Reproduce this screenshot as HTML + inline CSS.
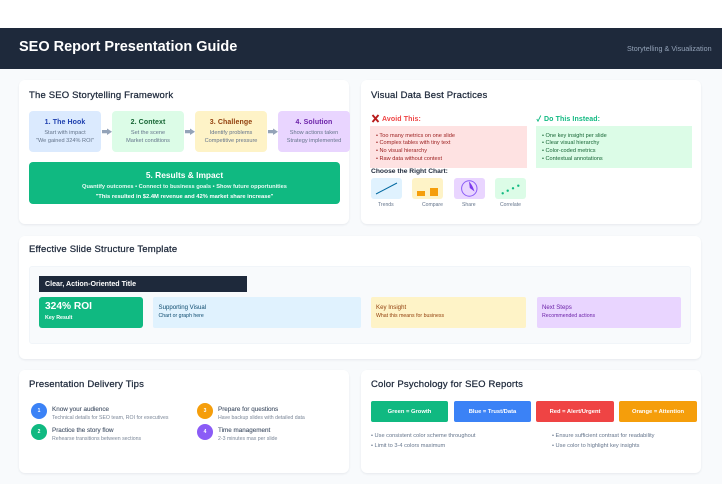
<!DOCTYPE html>
<html><head><meta charset="utf-8">
<style>
*{margin:0;padding:0;box-sizing:border-box}
html,body{width:722px;height:484px;overflow:hidden;background:#f8fafc;font-family:"Liberation Sans",sans-serif}
#w{position:absolute;left:0;top:0;width:722px;height:484px;filter:blur(.35px)}
.a{position:absolute}
.t{position:absolute;white-space:nowrap;line-height:1}
.c{text-align:center}
.card{position:absolute;background:#fff;border-radius:6px;box-shadow:0 1px 2px rgba(30,41,59,.08)}
.h{position:absolute;font-size:9.5px;font-weight:400;color:#1e293b;white-space:nowrap;line-height:1;-webkit-text-stroke:.25px #1e293b;letter-spacing:.18px}
.step{position:absolute;top:111px;width:72px;height:41px;border-radius:4px;text-align:center}
.step b{position:absolute;left:0;right:0;top:7.5px;font-size:7px;line-height:1;letter-spacing:.1px}
.step span{position:absolute;left:0;right:0;font-size:5.6px;line-height:1;color:#64748b;white-space:nowrap}
.li{position:absolute;font-size:5.6px;line-height:1;white-space:nowrap}
.ch{position:absolute;top:178px;width:31px;height:21px;border-radius:3px}
.lab{position:absolute;top:203px;font-size:5.1px;line-height:1;color:#64748b;white-space:nowrap}
.tb{position:absolute;top:297px;height:31px;border-radius:2px}
.tb i{position:absolute;left:5.5px;top:8px;font-style:normal;font-size:6.1px;line-height:1;white-space:nowrap}
.tb u{position:absolute;left:5.5px;top:17px;text-decoration:none;font-size:5.2px;line-height:1;white-space:nowrap}
.num{position:absolute;width:16px;height:16px;border-radius:50%;color:#fff;font-size:5px;font-weight:700;text-align:center;line-height:16px}
.tt{position:absolute;font-size:6.3px;line-height:1;color:#475569;white-space:nowrap;font-weight:400;-webkit-text-stroke:.12px #475569}
.td{position:absolute;font-size:5.2px;line-height:1;color:#7b8798;white-space:nowrap}
.col{position:absolute;top:401px;height:21px;border-radius:2px;color:#fff;font-size:5.8px;font-weight:700;text-align:center;line-height:23px;white-space:nowrap}
.bl{position:absolute;font-size:5.66px;line-height:1;color:#64748b;white-space:nowrap}
</style></head><body><div id="w">
<div class="a" style="left:0;top:0;width:722px;height:28px;background:#fff"></div>
<div class="a" style="left:0;top:28px;width:722px;height:41px;background:#1e293b"></div>
<div class="t" style="left:19px;top:40px;font-size:14.5px;font-weight:700;color:#fff">SEO Report Presentation Guide</div>
<div class="t" style="left:627px;top:45px;font-size:7.2px;color:#94a3b8">Storytelling &amp; Visualization</div>

<div class="card" style="left:19px;top:80px;width:330px;height:144px"></div>
<div class="card" style="left:361px;top:80px;width:340px;height:144px"></div>
<div class="card" style="left:19px;top:236px;width:682px;height:123px"></div>
<div class="card" style="left:19px;top:370px;width:330px;height:103px"></div>
<div class="card" style="left:361px;top:370px;width:340px;height:103px"></div>

<div class="h" style="left:29px;top:90.500px">The SEO Storytelling Framework</div>
<div class="step" style="left:29px;background:#dbeafe"><b style="color:#1e40af">1. The Hook</b><span style="top:19.500px">Start with impact</span><span style="top:27.500px">"We gained 324% ROI"</span></div>
<div class="step" style="left:112px;background:#dcfce7"><b style="color:#166534">2. Context</b><span style="top:19.500px">Set the scene</span><span style="top:27.500px">Market conditions</span></div>
<div class="step" style="left:195px;background:#fef3c7"><b style="color:#92400e">3. Challenge</b><span style="top:19.500px">Identify problems</span><span style="top:27.500px">Competitive pressure</span></div>
<div class="step" style="left:278px;background:#e9d5ff"><b style="color:#6b21a8">4. Solution</b><span style="top:19.500px">Show actions taken</span><span style="top:27.500px">Strategy implemented</span></div>
<svg class="a" style="left:0;top:120px" width="290" height="20" viewBox="0 120 290 20" fill="#94a3b8">
<path d="M102 130H107V128.500L112 131.700L107 135V133.300H102Z"/>
<path d="M185 130H190V128.500L195 131.700L190 135V133.300H185Z"/>
<path d="M268 130H273V128.500L278 131.700L273 135V133.300H268Z"/>
</svg>

<div class="a" style="left:29px;top:162px;width:311px;height:42px;background:#10b981;border-radius:4px"></div>
<div class="t c" style="left:29px;width:311px;top:171px;font-size:8.4px;font-weight:700;color:#fff">5. Results &amp; Impact</div>
<div class="t c" style="left:29px;width:311px;top:185px;font-size:5.7px;font-weight:700;color:#e6fbf3">Quantify outcomes • Connect to business goals • Show future opportunities</div>
<div class="t c" style="left:29px;width:311px;top:195px;font-size:5.8px;font-weight:700;color:#fff">"This resulted in $2.4M revenue and 42% market share increase"</div>

<div class="h" style="left:371px;top:90.500px">Visual Data Best Practices</div>
<svg class="a" style="left:371px;top:114px" width="9" height="9" viewBox="0 0 9 9"><path d="M1.500 1L7.500 8M7.500 1L1.500 8" stroke="#b91c1c" stroke-width="1.900"/></svg>
<div class="t" style="left:382px;top:116px;font-size:7px;font-weight:700;color:#ef4444;letter-spacing:.1px">Avoid This:</div>
<div class="a" style="left:370px;top:126px;width:157px;height:42px;background:#fee2e2"></div>
<div class="li" style="left:376px;top:134px;color:#991b1b">• Too many metrics on one slide</div>
<div class="li" style="left:376px;top:141px;color:#991b1b">• Complex tables with tiny text</div>
<div class="li" style="left:376px;top:149px;color:#991b1b">• No visual hierarchy</div>
<div class="li" style="left:376px;top:157px;color:#991b1b">• Raw data without context</div>

<svg class="a" style="left:536px;top:115px" width="6" height="7" viewBox="0 0 6 7"><path d="M.8 4L2 6.200L4.800 .5" fill="none" stroke="#10b981" stroke-width=".9"/></svg>
<div class="t" style="left:544px;top:116px;font-size:7px;font-weight:700;color:#10b981;letter-spacing:.1px">Do This Instead:</div>
<div class="a" style="left:536px;top:126px;width:156px;height:42px;background:#dcfce7"></div>
<div class="li" style="left:542px;top:134px;color:#166534">• One key insight per slide</div>
<div class="li" style="left:542px;top:141px;color:#166534">• Clear visual hierarchy</div>
<div class="li" style="left:542px;top:149px;color:#166534">• Color-coded metrics</div>
<div class="li" style="left:542px;top:157px;color:#166534">• Contextual annotations</div>

<div class="t" style="left:371px;top:169px;font-size:6.7px;font-weight:700;color:#1e293b">Choose the Right Chart:</div>
<div class="ch" style="left:371px;background:#e0f2fe"></div>
<div class="ch" style="left:412px;background:#fef3c7"></div>
<div class="ch" style="left:454px;background:#e9d5ff"></div>
<div class="ch" style="left:495px;background:#dcfce7"></div>
<svg class="a" style="left:361px;top:170px" width="180" height="32" viewBox="361 170 180 32">
<path d="M376 194L397 183" stroke="#0369a1" stroke-width="1" fill="none"/>
<rect x="417" y="191" width="8" height="5" fill="#f59e0b"/><rect x="430" y="188" width="8" height="8" fill="#f59e0b"/>
<circle cx="469.300" cy="188.500" r="7.700" fill="none" stroke="#8b5cf6" stroke-width="1"/><path d="M469 181.500L469.800 188L474.500 191.500C473 187 471.500 184 469 181.500Z" fill="#7c3aed"/>
<circle cx="502.700" cy="193.300" r="1.200" fill="#10b981"/><circle cx="507.700" cy="190.700" r="1.200" fill="#10b981"/><circle cx="513" cy="188.300" r="1.200" fill="#10b981"/><circle cx="518.300" cy="185.700" r="1.200" fill="#10b981"/>
</svg>
<div class="lab" style="left:378px">Trends</div>
<div class="lab" style="left:422px">Compare</div>
<div class="lab" style="left:462px">Share</div>
<div class="lab" style="left:500px">Correlate</div>

<div class="h" style="left:29px;top:245px">Effective Slide Structure Template</div>
<div class="a" style="left:29px;top:266px;width:662px;height:78px;background:#f8fafc;border:1px solid #f1f5f9;border-radius:3px"></div>
<div class="a" style="left:39px;top:276px;width:208px;height:16px;background:#1e293b"></div>
<div class="t" style="left:45px;top:281px;font-size:7.100px;font-weight:700;color:#fff">Clear, Action-Oriented Title</div>
<div class="tb" style="left:39px;width:104px;background:#10b981;border-radius:3px"><span class="t" style="left:6px;top:5px;font-size:10.200px;font-weight:700;color:#fff">324% ROI</span><span class="t" style="left:6px;top:19px;font-size:5.300px;font-weight:700;color:#fff">Key Result</span></div>
<div class="tb" style="left:153px;width:208px;background:#e0f2fe"><i style="color:#0c4a6e">Supporting Visual</i><u style="color:#0c4a6e">Chart or graph here</u></div>
<div class="tb" style="left:371px;width:155px;background:#fef3c7"><i style="left:5px;color:#92400e">Key Insight</i><u style="left:5px;color:#92400e">What this means for business</u></div>
<div class="tb" style="left:537px;width:144px;background:#e9d5ff"><i style="left:5px;color:#6b21a8">Next Steps</i><u style="left:5px;color:#6b21a8">Recommended actions</u></div>

<div class="h" style="left:29px;top:380px">Presentation Delivery Tips</div>
<div class="num" style="left:31px;top:403px;background:#3b82f6">1</div>
<div class="tt" style="left:52px;top:407px">Know your audience</div>
<div class="td" style="left:52px;top:416px">Technical details for SEO team, ROI for executives</div>
<div class="num" style="left:31px;top:424px;background:#10b981">2</div>
<div class="tt" style="left:52px;top:428px">Practice the story flow</div>
<div class="td" style="left:52px;top:437px">Rehearse transitions between sections</div>
<div class="num" style="left:197px;top:403px;background:#f59e0b">3</div>
<div class="tt" style="left:218px;top:407px">Prepare for questions</div>
<div class="td" style="left:218px;top:416px">Have backup slides with detailed data</div>
<div class="num" style="left:197px;top:424px;background:#8b5cf6">4</div>
<div class="tt" style="left:218px;top:428px">Time management</div>
<div class="td" style="left:218px;top:437px">2-3 minutes max per slide</div>

<div class="h" style="left:371px;top:380px">Color Psychology for SEO Reports</div>
<div class="col" style="left:371px;width:77px;background:#10b981">Green = Growth</div>
<div class="col" style="left:454px;width:77px;background:#3b82f6">Blue = Trust/Data</div>
<div class="col" style="left:536px;width:78px;background:#ef4444">Red = Alert/Urgent</div>
<div class="col" style="left:619px;width:78px;background:#f59e0b">Orange = Attention</div>
<div class="bl" style="left:371px;top:434px">• Use consistent color scheme throughout</div>
<div class="bl" style="left:371px;top:444px">• Limit to 3-4 colors maximum</div>
<div class="bl" style="left:552px;top:434px">• Ensure sufficient contrast for readability</div>
<div class="bl" style="left:552px;top:444px">• Use color to highlight key insights</div>
</div></body></html>
